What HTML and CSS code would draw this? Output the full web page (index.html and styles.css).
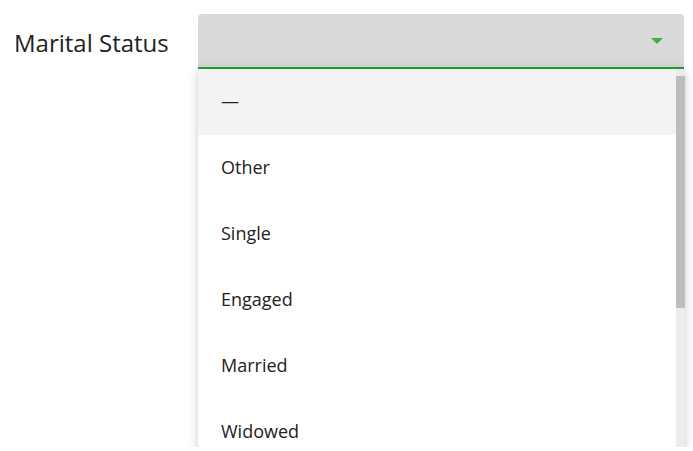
FILE: index.html
```html
<!DOCTYPE html>
<html lang="en">
<head>
    <meta charset="UTF-8">
    <meta name="viewport" content="width=device-width, initial-scale=1.0">
    <title>Marital Status</title>
    <link rel="stylesheet" href="styles.css">
</head>
<body>
    <div class="field">
        <label class="field-label" for="marital">Marital Status</label>
        <div class="select-wrap">
            <div class="select" id="marital">
                <span class="select-value"></span>
                <span class="select-arrow"></span>
            </div>
            <div class="dropdown">
                <ul class="options">
                    <li class="option active">&mdash;</li>
                    <li class="option">Other</li>
                    <li class="option">Single</li>
                    <li class="option">Engaged</li>
                    <li class="option">Married</li>
                    <li class="option">Widowed</li>
                </ul>
                <div class="scrollbar">
                    <div class="scrollbar-thumb"></div>
                </div>
            </div>
        </div>
    </div>
</body>
</html>
```

FILE: styles.css
```css
body {
    margin: 0;
    font-family: "Open Sans", "Noto Sans", sans-serif;
    color: #222;
    background-color: #fff;
}
.field {
    display: flex;
    align-items: flex-start;
    padding: 14px 8px 0 14px;
}
.field-label {
    width: 184px;
    flex-shrink: 0;
    font-size: 24px;
    line-height: 32px;
    padding-top: 13px;
}
.select-wrap {
    flex: 1;
    display: flex;
    flex-direction: column;
}
.select {
    display: flex;
    align-items: center;
    justify-content: space-between;
    height: 53px;
    margin-right: 1px;
    padding: 0 21px 0 23px;
    background: linear-gradient(#dadada 80%, #d4d4d4);
    border-bottom: 2px solid #22a12d;
    border-radius: 4px 4px 0 0;
}
.select-arrow {
    width: 0;
    height: 0;
    margin-top: 1px;
    border-left: 6px solid transparent;
    border-right: 6px solid transparent;
    border-top: 6px solid #3bb044;
}
.dropdown {
    display: flex;
    height: 378px;
    background-color: #fff;
    border-radius: 0 0 4px 4px;
    box-shadow: 0 3px 10px rgba(0, 0, 0, 0.22);
    overflow: hidden;
}
.options {
    flex: 1;
    margin: 0;
    padding: 0;
    list-style: none;
}
.option {
    height: 64px;
    line-height: 64px;
    padding: 0 0 2px 23px;
    font-size: 18px;
    color: #222;
}
.option.active {
    background-color: #f3f3f3;
}
.scrollbar {
    width: 9px;
    flex-shrink: 0;
    padding-top: 7px;
    background-color: #ececec;
}
.scrollbar-thumb {
    height: 232px;
    background-color: #bdbdbd;
}
```
